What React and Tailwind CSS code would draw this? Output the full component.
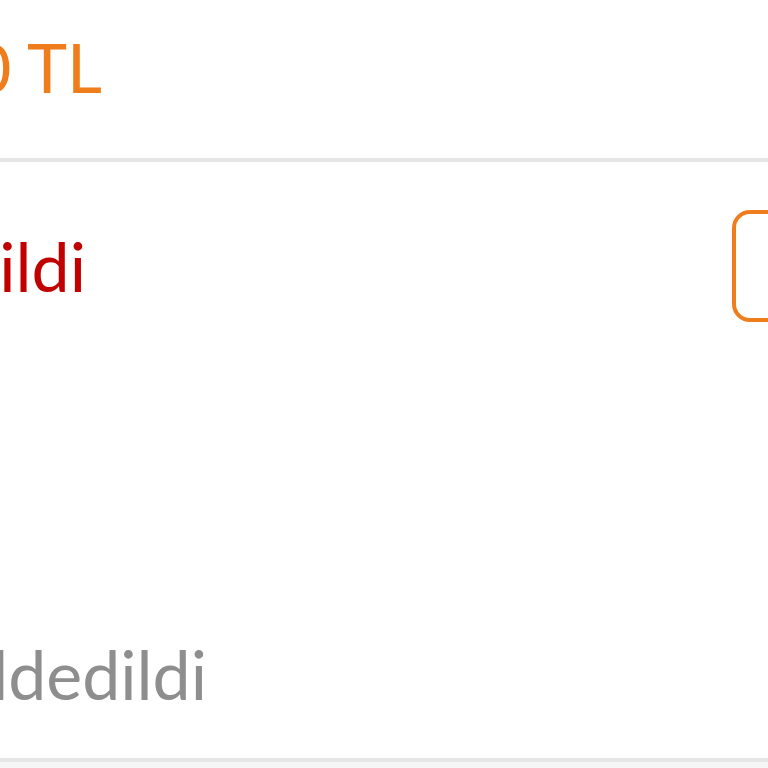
import React from 'react';

const Clip = ({ width, className, children }) => (
    <div className={`flex justify-end ${width}`}>
        <span className={`shrink-0 whitespace-nowrap ${className}`}>{children}</span>
    </div>
);

const App = () => {
    return (
        <div className="w-[768px] h-[768px] overflow-hidden bg-white font-['Lato',_sans-serif] text-[68px] leading-[68px]">
            {/* price row */}
            <div className="h-[158px] pt-[33px]">
                <Clip width="w-[102px]" className="text-[#f07d1b]">1.250 TL</Clip>
            </div>
            <div className="h-[4px] bg-[#e6e6e6]" />

            {/* order row */}
            <div className="h-[596px] grid grid-cols-[732px_180px]">
                <div className="flex flex-col">
                    <div className="pt-[70px]">
                        <Clip width="w-[86px]" className="text-[#c10000]">Gönderildi</Clip>
                    </div>
                    <div className="pt-[340px]">
                        <Clip width="w-[207px]" className="text-[#8e8e8e]">Reddedildi</Clip>
                    </div>
                </div>
                <div className="pt-[48px]">
                    <div className="h-[112px] border-[4px] border-[#f07d1b] rounded-[18px]" />
                </div>
            </div>
            <div className="h-[4px] bg-[#e6e6e6]" />
            <div className="h-[6px] bg-[#f6f6f6]" />
        </div>
    );
};

export default App;
